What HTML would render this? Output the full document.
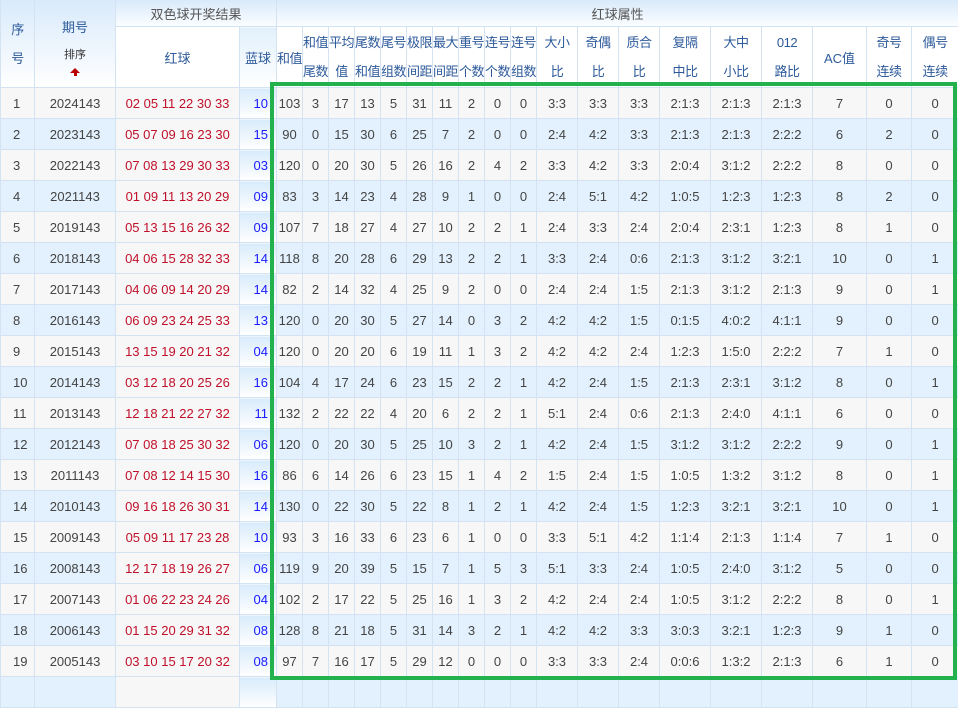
<!DOCTYPE html>
<html><head><meta charset="utf-8"><style>
body{margin:0;width:958px;height:682px;overflow:hidden;background:#fff;font-family:"Liberation Sans","Noto Sans CJK SC",sans-serif;}
table{border-collapse:collapse;table-layout:fixed;width:958px;font-size:13px;color:#444;}
td,th{border:1px solid #d3e3f2;padding:0;text-align:center;height:30px;font-weight:normal;overflow:hidden;white-space:nowrap;}
th{color:#2d5a9a;font-size:13px;overflow:visible;}
tr.h1 th{height:26px;border-top:none;background:linear-gradient(#d9eafb,#fbfdff);}
tr.h2 th{height:60px;background:#fff;}
th.two{line-height:29px;white-space:nowrap;letter-spacing:-0.5px;}
tr.o td{background:#f7f7f7;}
tr.e td{background:#e2f1fd;}
td.s{text-align:left;padding-left:12px;}
tr td.r{color:#c0102a;background:#f7f7f7;}
tr td.b{color:#1a1aff;text-align:right;padding-right:8px;background:linear-gradient(#d8ebfb,#fff);}
th.bb{background:linear-gradient(#e2f0fc,#fff)!important;}
#g{position:absolute;left:270px;top:82px;width:679px;height:590px;border:4px solid #22b14c;}
.arr{display:block;width:0;height:0;margin:0 auto;border-left:5px solid transparent;border-right:5px solid transparent;border-bottom:5px solid #b00;position:relative}
.arr:after{content:"";position:absolute;left:-1.5px;top:5px;width:3px;height:3px;background:#b00}
</style></head><body>
<table>
<colgroup><col style="width:34px"><col style="width:81px"><col style="width:124px"><col style="width:37px"><col style="width:26px"><col style="width:26px"><col style="width:26px"><col style="width:26px"><col style="width:26px"><col style="width:26px"><col style="width:26px"><col style="width:26px"><col style="width:26px"><col style="width:26px"><col style="width:41px"><col style="width:41px"><col style="width:41px"><col style="width:51px"><col style="width:51px"><col style="width:51px"><col style="width:54px"><col style="width:45px"><col style="width:47px"></colgroup>
<tr class="h1"><th rowspan="2" class="two" style="background:linear-gradient(#d9eafb,#fff)">序<br>号</th><th rowspan="2" style="background:linear-gradient(#d9eafb,#fff);line-height:26px">期号<br><span style="font-size:11px;color:#333">排序</span><span class="arr"></span></th><th colspan="2" style="color:#555">双色球开奖结果</th><th colspan="19" style="color:#555">红球属性</th></tr>
<tr class="h2"><th>红球</th><th class="bb">蓝球</th><th style="letter-spacing:-0.5px">和值</th><th class="two">和值<br>尾数</th><th class="two">平均<br>值</th><th class="two">尾数<br>和值</th><th class="two">尾号<br>组数</th><th class="two">极限<br>间距</th><th class="two">最大<br>间距</th><th class="two">重号<br>个数</th><th class="two">连号<br>个数</th><th class="two">连号<br>组数</th><th class="two">大小<br>比</th><th class="two">奇偶<br>比</th><th class="two">质合<br>比</th><th class="two">复隔<br>中比</th><th class="two">大中<br>小比</th><th class="two">012<br>路比</th><th>AC值</th><th class="two">奇号<br>连续</th><th class="two">偶号<br>连续</th></tr>
<tr class="o"><td class="s">1</td><td>2024143</td><td class="r">02 05 11 22 30 33</td><td class="b">10</td><td>103</td><td>3</td><td>17</td><td>13</td><td>5</td><td>31</td><td>11</td><td>2</td><td>0</td><td>0</td><td>3:3</td><td>3:3</td><td>3:3</td><td>2:1:3</td><td>2:1:3</td><td>2:1:3</td><td>7</td><td>0</td><td>0</td></tr>
<tr class="e"><td class="s">2</td><td>2023143</td><td class="r">05 07 09 16 23 30</td><td class="b">15</td><td>90</td><td>0</td><td>15</td><td>30</td><td>6</td><td>25</td><td>7</td><td>2</td><td>0</td><td>0</td><td>2:4</td><td>4:2</td><td>3:3</td><td>2:1:3</td><td>2:1:3</td><td>2:2:2</td><td>6</td><td>2</td><td>0</td></tr>
<tr class="o"><td class="s">3</td><td>2022143</td><td class="r">07 08 13 29 30 33</td><td class="b">03</td><td>120</td><td>0</td><td>20</td><td>30</td><td>5</td><td>26</td><td>16</td><td>2</td><td>4</td><td>2</td><td>3:3</td><td>4:2</td><td>3:3</td><td>2:0:4</td><td>3:1:2</td><td>2:2:2</td><td>8</td><td>0</td><td>0</td></tr>
<tr class="e"><td class="s">4</td><td>2021143</td><td class="r">01 09 11 13 20 29</td><td class="b">09</td><td>83</td><td>3</td><td>14</td><td>23</td><td>4</td><td>28</td><td>9</td><td>1</td><td>0</td><td>0</td><td>2:4</td><td>5:1</td><td>4:2</td><td>1:0:5</td><td>1:2:3</td><td>1:2:3</td><td>8</td><td>2</td><td>0</td></tr>
<tr class="o"><td class="s">5</td><td>2019143</td><td class="r">05 13 15 16 26 32</td><td class="b">09</td><td>107</td><td>7</td><td>18</td><td>27</td><td>4</td><td>27</td><td>10</td><td>2</td><td>2</td><td>1</td><td>2:4</td><td>3:3</td><td>2:4</td><td>2:0:4</td><td>2:3:1</td><td>1:2:3</td><td>8</td><td>1</td><td>0</td></tr>
<tr class="e"><td class="s">6</td><td>2018143</td><td class="r">04 06 15 28 32 33</td><td class="b">14</td><td>118</td><td>8</td><td>20</td><td>28</td><td>6</td><td>29</td><td>13</td><td>2</td><td>2</td><td>1</td><td>3:3</td><td>2:4</td><td>0:6</td><td>2:1:3</td><td>3:1:2</td><td>3:2:1</td><td>10</td><td>0</td><td>1</td></tr>
<tr class="o"><td class="s">7</td><td>2017143</td><td class="r">04 06 09 14 20 29</td><td class="b">14</td><td>82</td><td>2</td><td>14</td><td>32</td><td>4</td><td>25</td><td>9</td><td>2</td><td>0</td><td>0</td><td>2:4</td><td>2:4</td><td>1:5</td><td>2:1:3</td><td>3:1:2</td><td>2:1:3</td><td>9</td><td>0</td><td>1</td></tr>
<tr class="e"><td class="s">8</td><td>2016143</td><td class="r">06 09 23 24 25 33</td><td class="b">13</td><td>120</td><td>0</td><td>20</td><td>30</td><td>5</td><td>27</td><td>14</td><td>0</td><td>3</td><td>2</td><td>4:2</td><td>4:2</td><td>1:5</td><td>0:1:5</td><td>4:0:2</td><td>4:1:1</td><td>9</td><td>0</td><td>0</td></tr>
<tr class="o"><td class="s">9</td><td>2015143</td><td class="r">13 15 19 20 21 32</td><td class="b">04</td><td>120</td><td>0</td><td>20</td><td>20</td><td>6</td><td>19</td><td>11</td><td>1</td><td>3</td><td>2</td><td>4:2</td><td>4:2</td><td>2:4</td><td>1:2:3</td><td>1:5:0</td><td>2:2:2</td><td>7</td><td>1</td><td>0</td></tr>
<tr class="e"><td class="s">10</td><td>2014143</td><td class="r">03 12 18 20 25 26</td><td class="b">16</td><td>104</td><td>4</td><td>17</td><td>24</td><td>6</td><td>23</td><td>15</td><td>2</td><td>2</td><td>1</td><td>4:2</td><td>2:4</td><td>1:5</td><td>2:1:3</td><td>2:3:1</td><td>3:1:2</td><td>8</td><td>0</td><td>1</td></tr>
<tr class="o"><td class="s">11</td><td>2013143</td><td class="r">12 18 21 22 27 32</td><td class="b">11</td><td>132</td><td>2</td><td>22</td><td>22</td><td>4</td><td>20</td><td>6</td><td>2</td><td>2</td><td>1</td><td>5:1</td><td>2:4</td><td>0:6</td><td>2:1:3</td><td>2:4:0</td><td>4:1:1</td><td>6</td><td>0</td><td>0</td></tr>
<tr class="e"><td class="s">12</td><td>2012143</td><td class="r">07 08 18 25 30 32</td><td class="b">06</td><td>120</td><td>0</td><td>20</td><td>30</td><td>5</td><td>25</td><td>10</td><td>3</td><td>2</td><td>1</td><td>4:2</td><td>2:4</td><td>1:5</td><td>3:1:2</td><td>3:1:2</td><td>2:2:2</td><td>9</td><td>0</td><td>1</td></tr>
<tr class="o"><td class="s">13</td><td>2011143</td><td class="r">07 08 12 14 15 30</td><td class="b">16</td><td>86</td><td>6</td><td>14</td><td>26</td><td>6</td><td>23</td><td>15</td><td>1</td><td>4</td><td>2</td><td>1:5</td><td>2:4</td><td>1:5</td><td>1:0:5</td><td>1:3:2</td><td>3:1:2</td><td>8</td><td>0</td><td>1</td></tr>
<tr class="e"><td class="s">14</td><td>2010143</td><td class="r">09 16 18 26 30 31</td><td class="b">14</td><td>130</td><td>0</td><td>22</td><td>30</td><td>5</td><td>22</td><td>8</td><td>1</td><td>2</td><td>1</td><td>4:2</td><td>2:4</td><td>1:5</td><td>1:2:3</td><td>3:2:1</td><td>3:2:1</td><td>10</td><td>0</td><td>1</td></tr>
<tr class="o"><td class="s">15</td><td>2009143</td><td class="r">05 09 11 17 23 28</td><td class="b">10</td><td>93</td><td>3</td><td>16</td><td>33</td><td>6</td><td>23</td><td>6</td><td>1</td><td>0</td><td>0</td><td>3:3</td><td>5:1</td><td>4:2</td><td>1:1:4</td><td>2:1:3</td><td>1:1:4</td><td>7</td><td>1</td><td>0</td></tr>
<tr class="e"><td class="s">16</td><td>2008143</td><td class="r">12 17 18 19 26 27</td><td class="b">06</td><td>119</td><td>9</td><td>20</td><td>39</td><td>5</td><td>15</td><td>7</td><td>1</td><td>5</td><td>3</td><td>5:1</td><td>3:3</td><td>2:4</td><td>1:0:5</td><td>2:4:0</td><td>3:1:2</td><td>5</td><td>0</td><td>0</td></tr>
<tr class="o"><td class="s">17</td><td>2007143</td><td class="r">01 06 22 23 24 26</td><td class="b">04</td><td>102</td><td>2</td><td>17</td><td>22</td><td>5</td><td>25</td><td>16</td><td>1</td><td>3</td><td>2</td><td>4:2</td><td>2:4</td><td>2:4</td><td>1:0:5</td><td>3:1:2</td><td>2:2:2</td><td>8</td><td>0</td><td>1</td></tr>
<tr class="e"><td class="s">18</td><td>2006143</td><td class="r">01 15 20 29 31 32</td><td class="b">08</td><td>128</td><td>8</td><td>21</td><td>18</td><td>5</td><td>31</td><td>14</td><td>3</td><td>2</td><td>1</td><td>4:2</td><td>4:2</td><td>3:3</td><td>3:0:3</td><td>3:2:1</td><td>1:2:3</td><td>9</td><td>1</td><td>0</td></tr>
<tr class="o"><td class="s">19</td><td>2005143</td><td class="r">03 10 15 17 20 32</td><td class="b">08</td><td>97</td><td>7</td><td>16</td><td>17</td><td>5</td><td>29</td><td>12</td><td>0</td><td>0</td><td>0</td><td>3:3</td><td>3:3</td><td>2:4</td><td>0:0:6</td><td>1:3:2</td><td>2:1:3</td><td>6</td><td>1</td><td>0</td></tr>
<tr class="e"><td class="s"></td><td></td><td class="r"></td><td class="b"></td><td></td><td></td><td></td><td></td><td></td><td></td><td></td><td></td><td></td><td></td><td></td><td></td><td></td><td></td><td></td><td></td><td></td><td></td><td></td></tr>
</table>
<div id="g"></div>
</body></html>
